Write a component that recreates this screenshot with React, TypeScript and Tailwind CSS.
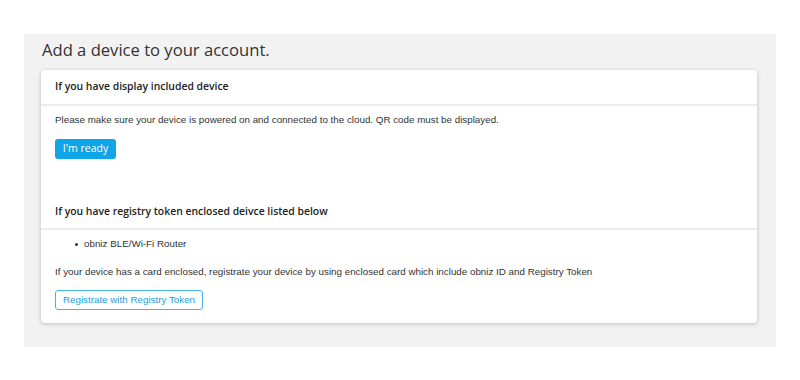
export default function App() {
  return (
    <div className="w-[800px] h-[380px] bg-white pt-[34px] pl-[24px]">
      <div className="w-[752px] h-[313px] bg-[#f2f2f2] pl-[17px] pt-[6px]">
        <h1 className="text-[16.6px] leading-[20px] text-[#333] font-['Open_Sans',sans-serif] ml-[1px] mb-[10px]">
          Add a device to your account.
        </h1>
        <div className="w-[716px] bg-white rounded-[4px] shadow-[0_1px_4px_rgba(0,0,0,0.22)] font-['Liberation_Sans',Arial,sans-serif] text-[#333]">
          <div className="h-[36px] flex items-center px-[14px] border-b-2 border-[#ececec]">
            <h2 className="text-[10.4px] font-semibold text-[#222] font-['Open_Sans',sans-serif]">
              If you have display included device
            </h2>
          </div>
          <div className="px-[14px] pt-[6px]">
            <p className="text-[9.8px] leading-[16px]">
              Please make sure your device is powered on and connected to the cloud. QR code must be displayed.
            </p>
            <button className="mt-[11px] w-[61px] h-[20px] rounded-[3px] bg-[#0fa5e9] text-white text-[10.5px] font-['Open_Sans',sans-serif] flex items-center justify-center">
              I'm ready
            </button>
          </div>
          <div className="mt-[36px] h-[35px] flex items-center px-[14px] border-b-2 border-[#ececec]">
            <h2 className="text-[10.4px] font-semibold text-[#222] font-['Open_Sans',sans-serif]">
              If you have registry token enclosed deivce listed below
            </h2>
          </div>
          <div className="px-[14px] pt-[6px] pb-[13px]">
            <ul className="pl-[20px] text-[9.8px] leading-[16px]">
              <li className="flex items-center gap-[6px]">
                <span className="w-[3px] h-[3px] rounded-full bg-[#333]"></span>
                <span>obniz BLE/Wi-Fi Router</span>
              </li>
            </ul>
            <p className="mt-[12px] text-[9.8px] leading-[16px]">
              If your device has a card enclosed, registrate your device by using enclosed card which include obniz ID and Registry Token
            </p>
            <button className="mt-[10px] w-[148px] h-[20px] rounded-[3px] border border-[#45b4ec] text-[#1b9ee0] text-[9.8px] flex items-center justify-center">
              Registrate with Registry Token
            </button>
          </div>
        </div>
      </div>
    </div>
  );
}
